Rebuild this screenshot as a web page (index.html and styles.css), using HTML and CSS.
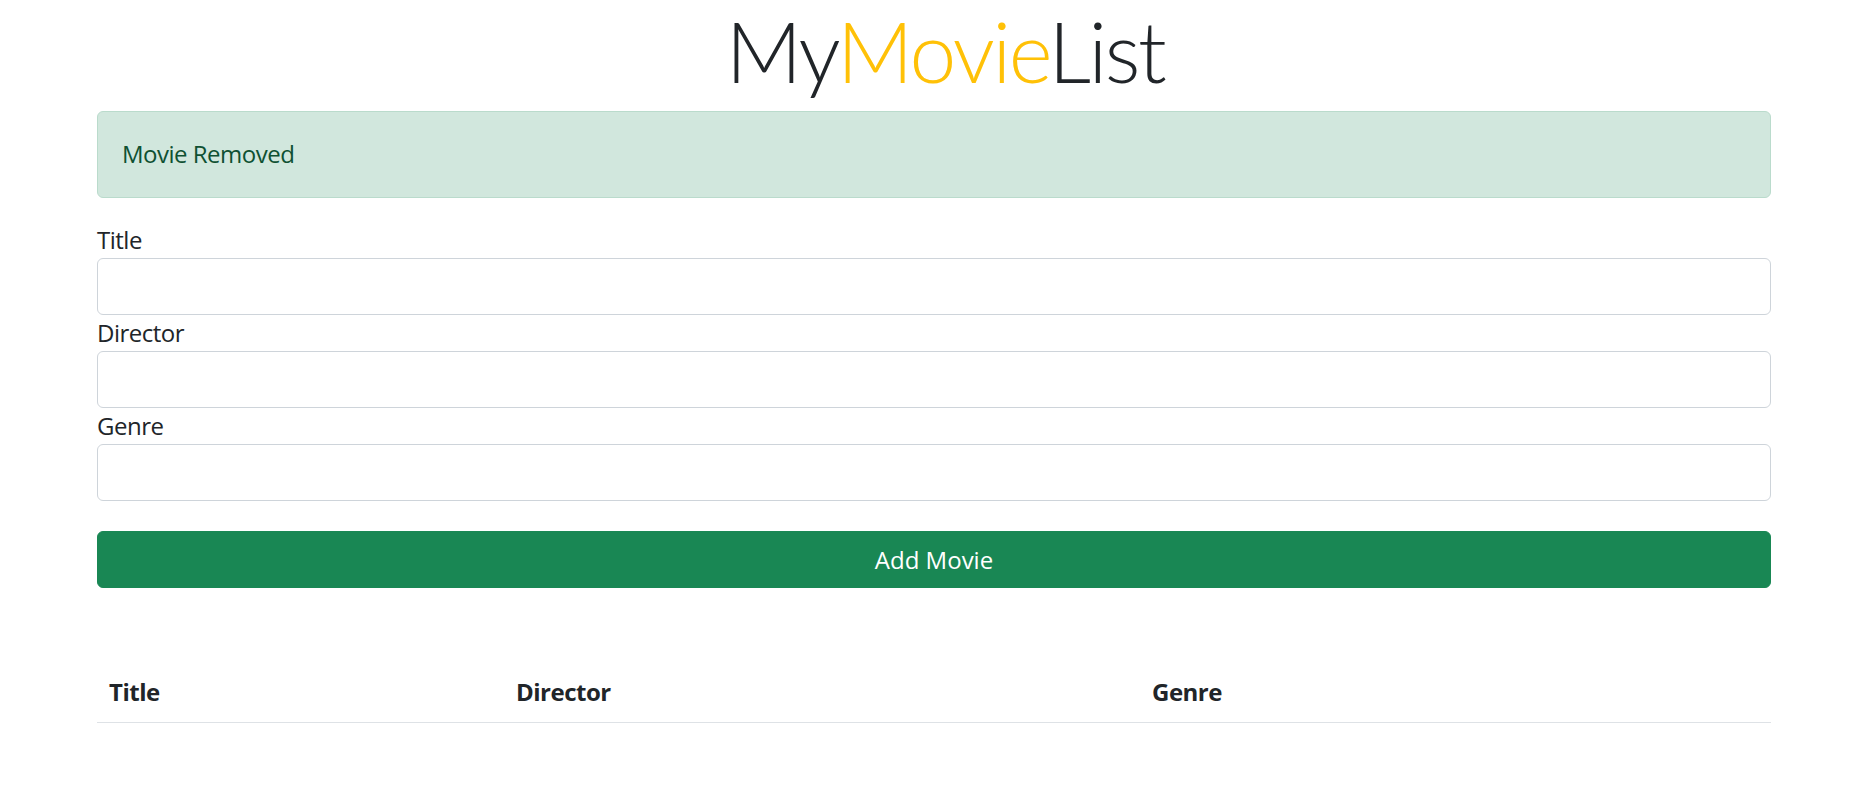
FILE: index.html
```html
<!DOCTYPE html>
<html lang="en">
<head>
<meta charset="utf-8">
<title>MyMovieList</title>
<link rel="stylesheet" href="styles.css">
</head>
<body>
<div class="container">
  <h1 class="brand"><span class="dark">My</span><span class="yellow">Movie</span><span class="dark">List</span></h1>
  <div class="alert">Movie Removed</div>
  <form class="movie-form">
    <label class="label" for="title">Title</label>
    <input class="input" id="title" type="text">
    <label class="label" for="director">Director</label>
    <input class="input" id="director" type="text">
    <label class="label" for="genre">Genre</label>
    <input class="input" id="genre" type="text">
    <button class="btn" type="button">Add Movie</button>
  </form>
  <table class="movies">
    <thead>
      <tr>
        <th class="col-title">Title</th>
        <th class="col-director">Director</th>
        <th class="col-genre">Genre</th>
      </tr>
    </thead>
    <tbody></tbody>
  </table>
</div>
</body>
</html>
```
FILE: styles.css
```css
* { box-sizing: border-box; }
html, body { margin: 0; padding: 0; background: #fff; }
body {
  font-family: "Open Sans", "Noto Sans", sans-serif;
  font-size: 24px;
  line-height: 36px;
  letter-spacing: -0.5px;
  color: #212529;
}
.container {
  width: 1674px;
  margin-left: 97px;
}
.brand {
  margin: 0 0 10px 0;
  padding-left: 22px;
  height: 101px;
  font-family: Lato, "Open Sans", sans-serif;
  font-size: 84px;
  line-height: 101px;
  font-weight: 300;
  letter-spacing: -2.5px;
  text-align: center;
}
.dark { color: #212529; }
.yellow { color: #ffc107; }
.alert {
  background: #d1e7dd;
  border: 1.5px solid #badbcc;
  color: #0f5132;
  border-radius: 6px;
  padding: 24px 24px;
  height: 87px;
  margin-bottom: 24px;
}
.movie-form {
  display: flex;
  flex-direction: column;
}
.label {
  display: block;
  height: 36px;
}
.input {
  display: block;
  width: 100%;
  height: 57px;
  border: 1.5px solid #ced4da;
  border-radius: 6px;
  background: #fff;
  font: inherit;
  padding: 9px 18px;
  margin: 0;
}
.btn {
  margin-top: 30px;
  height: 57px;
  width: 100%;
  background: #198754;
  border: 1.5px solid #198754;
  border-radius: 6px;
  color: #fff;
  font: inherit;
  padding: 0;
}
.movies {
  margin-top: 74px;
  width: 100%;
  table-layout: fixed;
  border-collapse: collapse;
}
.movies th {
  text-align: left;
  font-weight: 700;
  padding: 12px 12px;
  height: 60px;
  border-bottom: 1.5px solid #dee2e6;
}
.col-title { width: 407px; }
.col-director { width: 636px; }
```
